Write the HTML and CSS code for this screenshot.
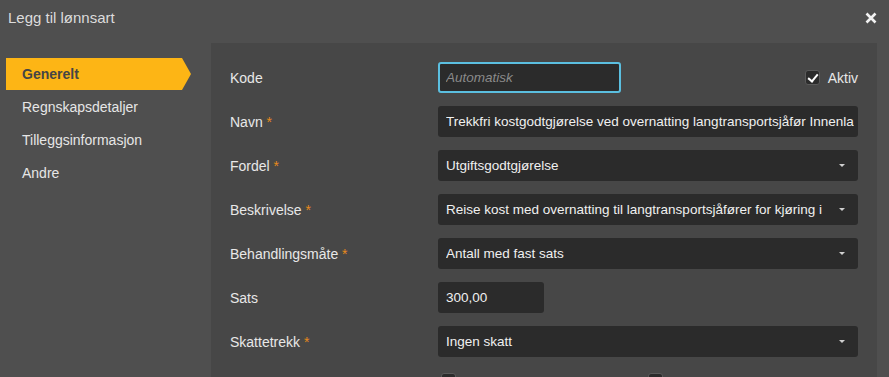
FILE: index.html
```html
<!DOCTYPE html>
<html lang="no">
<head>
  <meta charset="UTF-8" />
  <title>Legg til lønnsart</title>
  <link rel="stylesheet" href="styles.css">
</head>
<body>
  <div class="modal">
    <div class="modal-header">
      <h1>Legg til lønnsart</h1>
      <button class="close" type="button" aria-label="Lukk">
        <svg width="12" height="12" viewBox="0 0 12 12"><path d="M1.5 1.5 L10.5 10.5 M10.5 1.5 L1.5 10.5" stroke="#f2f2f2" stroke-width="2.6" stroke-linecap="butt"/></svg>
      </button>
    </div>

    <div class="modal-body">
      <ul class="side-nav">
        <li class="active">Generelt</li>
        <li>Regnskapsdetaljer</li>
        <li>Tilleggsinformasjon</li>
        <li>Andre</li>
      </ul>

      <div class="panel">
        <div class="row">
          <label>Kode</label>
          <div class="kode-wrap">
            <input class="field short focus" type="text" placeholder="Automatisk" />
            <label class="check"><span class="box checked"></span>Aktiv</label>
          </div>
        </div>

        <div class="row">
          <label>Navn <span class="req">*</span></label>
          <div class="field"><span class="val">Trekkfri kostgodtgjørelse ved overnatting langtransportsjåfør Innenlands</span></div>
        </div>

        <div class="row">
          <label>Fordel <span class="req">*</span></label>
          <div class="field select"><span class="val">Utgiftsgodtgjørelse</span></div>
        </div>

        <div class="row">
          <label>Beskrivelse <span class="req">*</span></label>
          <div class="field select"><span class="val">Reise kost med overnatting til langtransportsjåfører for kjøring i utlandet</span></div>
        </div>

        <div class="row">
          <label>Behandlingsmåte <span class="req">*</span></label>
          <div class="field select"><span class="val">Antall med fast sats</span></div>
        </div>

        <div class="row">
          <label>Sats</label>
          <div class="field sats"><span class="val">300,00</span></div>
        </div>

        <div class="row">
          <label>Skattetrekk <span class="req">*</span></label>
          <div class="field select"><span class="val">Ingen skatt</span></div>
        </div>

        <div class="row">
          <label></label>
          <div class="checks">
            <span class="box"></span>
            <span class="box"></span>
          </div>
        </div>
      </div>
    </div>
  </div>
</body>
</html>
```

FILE: styles.css
```css
* {
  box-sizing: border-box;
  margin: 0;
  padding: 0;
}

html, body {
  height: 100%;
}

body {
  background: #4f4f4f;
  font-family: 'Liberation Sans', Arial, sans-serif;
  font-size: 13.5px;
  color: #eeeeee;
  overflow: hidden;
}

.modal-header {
  height: 43px;
  display: flex;
  align-items: center;
  justify-content: space-between;
  padding: 0 12px 8px 8px;
}

.modal-header h1 {
  font-size: 15px;
  font-weight: normal;
  color: #dcdcdc;
}

.close {
  background: none;
  border: none;
  display: flex;
}

.modal-body {
  display: flex;
  align-items: flex-start;
}

.side-nav {
  list-style: none;
  flex: 0 0 211px;
  padding: 15px 0 0 6px;
}

.side-nav li {
  width: 185px;
  height: 33px;
  line-height: 32px;
  padding-left: 16px;
  font-size: 14px;
  color: #e6e6e6;
}

.side-nav li.active {
  height: 32px;
  background: #fdb515;
  color: #454545;
  font-weight: bold;
  clip-path: polygon(0 0, 176px 0, 185px 50%, 176px 100%, 0 100%);
  margin-bottom: 1px;
}

.panel {
  flex: 1;
  min-width: 0;
  margin-right: 12px;
  background: #474747;
  padding: 19px 19px 0 19px;
  min-height: 400px;
}

.row {
  display: flex;
  align-items: center;
  margin-bottom: 13px;
}

.row > label {
  flex: 0 0 208px;
  color: #e8e8e8;
  font-size: 14px;
}

.req {
  color: #e8891c;
}

.field {
  flex: 1;
  min-width: 0;
  height: 31px;
  line-height: 31px;
  background: #2b2b2b;
  border-radius: 3px;
  padding: 0 4px 0 8px;
  color: #f0f0f0;
  font-family: inherit;
  font-size: 13.5px;
  border: none;
}

.val {
  display: block;
  white-space: nowrap;
  overflow: hidden;
}

.field.select {
  position: relative;
  padding-right: 36px;
}

.field.select::after {
  content: '';
  position: absolute;
  right: 13px;
  top: 14px;
  border-left: 3px solid transparent;
  border-right: 3px solid transparent;
  border-top: 3px solid #cfcfcf;
}

.field.sats {
  flex: none;
  width: 106px;
}

.kode-wrap {
  flex: 1;
  display: flex;
  align-items: center;
  justify-content: space-between;
}

.field.short {
  flex: none;
  width: 183px;
  border: 2px solid #5bbfe0;
  padding: 0 6px;
  outline: none;
}

.field.short::placeholder {
  color: #8a8a8a;
  font-style: italic;
}

.check {
  display: flex;
  align-items: center;
  gap: 8px;
  color: #e8e8e8;
  font-size: 14px;
}

.box {
  width: 15px;
  height: 15px;
  background: #2b2b2b;
  border: 1px solid #5a5a5a;
  border-radius: 3px;
  position: relative;
}

.box.checked::after {
  content: '';
  position: absolute;
  left: 4px;
  top: 1px;
  width: 4px;
  height: 8px;
  border-right: 2px solid #ffffff;
  border-bottom: 2px solid #ffffff;
  transform: rotate(40deg);
}

.checks {
  flex: 1;
  display: flex;
  gap: 192px;
  padding: 3px 0 0 3px;
}
```
